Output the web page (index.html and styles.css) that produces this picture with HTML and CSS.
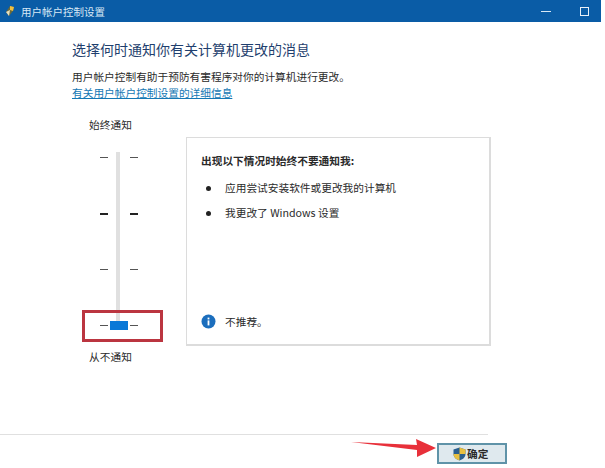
FILE: index.html
```html
<!DOCTYPE html>
<html lang="zh-CN">
	<head>
		<meta charset="UTF-8" />
		<title>用户帐户控制设置</title>
		<link rel="stylesheet" href="styles.css">
	</head>
	<body>
		<div class="window">
			<header class="titlebar">
				<svg class="app_icon" width="10" height="12" viewBox="0 0 10 12">
					<path d="M1 7 L5 1 L9 2 L8 6 L4 11 Z" fill="#6b6a3a" />
					<path d="M5 1 L9 2 L8 6 L5 5 Z" fill="#f0c040" />
					<path d="M1 7 L5 5 L4 11 Z" fill="#e8e0c0" />
				</svg>
				<span class="title_text">用户帐户控制设置</span>
				<span class="btn_min"></span>
				<span class="btn_max"></span>
			</header>

			<main class="content">
				<h1 class="heading">选择何时通知你有关计算机更改的消息</h1>
				<p class="intro">用户帐户控制有助于预防有害程序对你的计算机进行更改。</p>
				<a class="more_link" href="#">有关用户帐户控制设置的详细信息</a>

				<div class="settings">
					<div class="slider_col">
						<div class="slider_label">始终通知</div>
						<div class="slider">
							<div class="tick_row"><span class="tick"></span><span class="tick_gap"></span><span class="tick"></span></div>
							<div class="tick_row"><span class="tick tick_bold"></span><span class="tick_gap"></span><span class="tick tick_bold"></span></div>
							<div class="tick_row"><span class="tick"></span><span class="tick_gap"></span><span class="tick"></span></div>
							<div class="tick_row"><span class="tick"></span><span class="thumb"></span><span class="tick"></span></div>
							<div class="red_box"></div>
						</div>
						<div class="slider_label slider_label_bottom">从不通知</div>
					</div>

					<section class="panel">
						<div>
							<h2 class="panel_title">出现以下情况时始终不要通知我:</h2>
							<ul class="panel_list">
								<li>应用尝试安装软件或更改我的计算机</li>
								<li>我更改了 Windows 设置</li>
							</ul>
						</div>
						<div class="notice">
							<svg width="15" height="15" viewBox="0 0 15 15">
								<circle cx="7.5" cy="7.5" r="7" fill="#1b6ebd" />
								<rect x="6.6" y="6.4" width="1.8" height="5" fill="#fff" />
								<rect x="6.6" y="3.6" width="1.8" height="1.8" fill="#fff" />
							</svg>
							<span>不推荐。</span>
						</div>
					</section>
				</div>
			</main>

			<footer class="footer">
				<button class="ok_btn" type="button">
					<svg width="13" height="14" viewBox="0 0 13 14">
						<path d="M6.5 0.5 L12.5 2.5 V7 C12.5 10.5 9.5 12.5 6.5 13.5 C3.5 12.5 0.5 10.5 0.5 7 V2.5 Z" fill="#2a5f8f" />
						<path d="M6.5 0.5 L12.5 2.5 V7 H6.5 Z" fill="#e8c040" />
						<path d="M6.5 7 H0.5 C0.5 10.5 3.5 12.5 6.5 13.5 Z" fill="#e8c040" />
					</svg>
					<span>确定</span>
				</button>
				<svg class="arrow" width="86" height="20" viewBox="0 0 86 20">
					<path d="M0 4 L66 7 L65 1 L85 10 L66 19 L66 12 Z" fill="#e8303a" />
				</svg>
			</footer>
		</div>
	</body>
</html>
```

FILE: styles.css
```css
* {
	box-sizing: border-box;
}

body {
	margin: 0;
	background-color: #fff;
	font-family: 'Noto Sans CJK SC', 'Noto Sans', sans-serif;
	font-size: 10.7px;
	color: #2a2a2a;
	overflow: hidden;
}

.window {
	display: flex;
	flex-direction: column;
	height: 468px;
}

.titlebar {
	display: flex;
	align-items: center;
	width: 601px;
	height: 22px;
	flex-shrink: 0;
	padding-left: 5px;
	background-color: #0a5ca6;
	color: #d8e8f5;
}

.title_text {
	margin-left: 6px;
	flex-grow: 1;
	font-size: 10.5px;
}

.btn_min {
	width: 10px;
	height: 1px;
	margin-right: 29px;
	background-color: #d8e8f5;
}

.btn_max {
	width: 9px;
	height: 9px;
	margin-right: 12px;
	border: 1px solid #e8f0f8;
}

.content {
	flex-grow: 1;
	padding: 17px 0 0 72px;
}

.heading {
	margin: 0;
	font-size: 14px;
	font-weight: 400;
	line-height: 20px;
	color: #1f3f6e;
}

.intro {
	margin: 10px 0 0;
	line-height: 16px;
}

.more_link {
	display: block;
	width: fit-content;
	line-height: 16px;
	color: #1478b4;
	text-decoration: underline;
}

.settings {
	display: flex;
	margin-top: 36px;
	margin-left: 10px;
}

.slider_col {
	width: 104px;
	margin-top: -20px;
}

.slider_label {
	width: 57px;
	line-height: 16px;
	text-align: center;
}

.slider_label_bottom {
	margin-top: 19px;
}

.slider {
	position: relative;
	display: flex;
	flex-direction: column;
	gap: 47px;
	width: 57px;
	margin-top: 20px;
	margin-left: 8px;
}

.slider::before {
	content: '';
	position: absolute;
	top: -1px;
	left: 26px;
	width: 4px;
	height: 174px;
	background-color: #e0e0e0;
}

.tick_row {
	position: relative;
	display: flex;
	align-items: center;
	justify-content: center;
	height: 9px;
}

.tick {
	width: 8px;
	height: 1px;
	background-color: #555;
}

.tick_bold {
	height: 2px;
	background-color: #222;
}

.tick_gap {
	width: 22px;
}

.thumb {
	width: 18px;
	height: 9px;
	margin: 0 2px;
	background-color: #0a78d7;
}

.red_box {
	position: absolute;
	left: -8px;
	bottom: -12px;
	width: 81px;
	height: 32px;
	border: 3px solid #bb3540;
}

.panel {
	display: flex;
	flex-direction: column;
	justify-content: space-between;
	width: 305px;
	height: 209px;
	padding: 15px 14px;
	border: 1px solid #dcdcdc;
	border-bottom-width: 2px;
	border-right-width: 2px;
}

.panel_title {
	margin: 0;
	font-size: 10.7px;
	font-weight: 700;
	line-height: 16px;
}

.panel_list {
	display: flex;
	flex-direction: column;
	gap: 9px;
	margin: 11px 0 0;
	padding-left: 5px;
	list-style: none;
	line-height: 16px;
}

.panel_list li {
	display: flex;
	align-items: center;
	gap: 14px;
}

.panel_list li::before {
	content: '';
	width: 5px;
	height: 5px;
	border-radius: 50%;
	background-color: #222;
}

.notice {
	display: flex;
	align-items: center;
	gap: 9px;
}

.footer {
	position: relative;
	display: flex;
	justify-content: flex-end;
	width: 488px;
	height: 34px;
	flex-shrink: 0;
	border-top: 1px solid #e0e0e0;
}

.ok_btn {
	display: flex;
	align-items: center;
	gap: 1px;
	flex-shrink: 0;
	width: 70px;
	height: 21px;
	margin: 8px -19px 0 0;
	padding: 0 0 0 14px;
	border: 2px solid #5f93a8;
	background-color: #dfe9ee;
	font-family: inherit;
	font-size: 10.7px;
	font-weight: 700;
	color: #2a2a2a;
}

.arrow {
	position: absolute;
	left: 351px;
	top: 3px;
}
```
